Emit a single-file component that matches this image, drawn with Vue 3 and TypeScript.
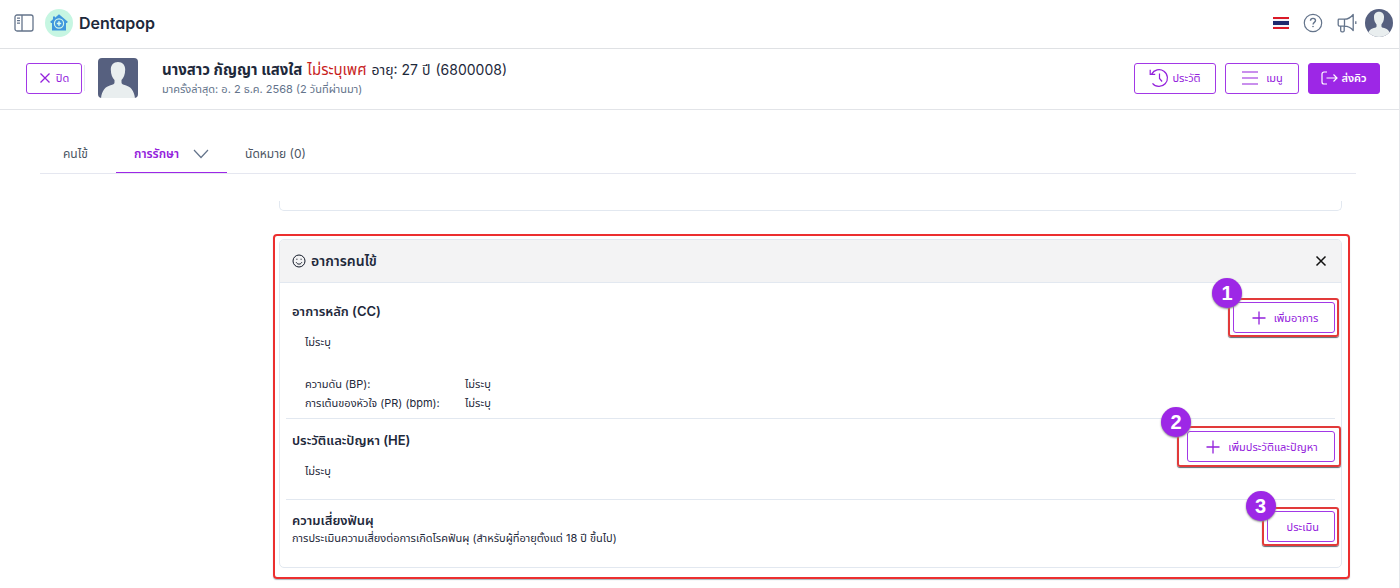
<script setup lang="ts">
interface Vital {
  label: string
  value: string
}

const vitals: Vital[] = [
  { label: 'ความดัน (BP):', value: 'ไม่ระบุ' },
  { label: 'การเต้นของหัวใจ (PR) (bpm):', value: 'ไม่ระบุ' },
]
</script>

<template>
  <div class="app">
    <header class="topbar">
      <button class="icon-btn" type="button" aria-label="Sidebar">
        <svg width="20" height="18" viewBox="0 0 20 18" fill="none" stroke="#64748b" stroke-width="1.3">
          <rect x="1" y="1" width="18" height="16" rx="2" />
          <path d="M8 1v16M3 4.2h3M3 6.7h3M3 9.2h3" />
        </svg>
      </button>
      <a class="brand" href="#">
        <svg width="28" height="28" viewBox="0 0 28 28">
          <circle cx="14" cy="14" r="14" fill="#c6f6e2" />
          <path d="M14 5.200 22.800 12.800l-.8 1.200h-1V21.500H7V14H6l-.8-1.200L8 10.300V7.500h2v1.200z" fill="#3f97dd" />
          <circle cx="14" cy="14.500" r="4.600" fill="none" stroke="#d0f7ea" stroke-width="1.200" />
          <path d="M14 12.300v4.400M11.800 14.500h4.400" stroke="#d8fbee" stroke-width="1.500" />
        </svg>
        <span>Dentapop</span>
      </a>
      <nav class="tools">
        <button class="icon-btn" type="button" aria-label="Language">
          <svg width="16" height="12" viewBox="0 0 16 12">
            <path fill="#da1a28" d="M0 0h16v12H0z" />
            <path fill="#f4f5f8" d="M0 2h16v8H0z" />
            <path fill="#1e2a6e" d="M0 4h16v4H0z" />
          </svg>
        </button>
        <button class="icon-btn" type="button" aria-label="Help">
          <svg width="20" height="20" viewBox="0 0 20 20" fill="none" stroke="#64748b" stroke-width="1.2">
            <circle cx="10" cy="10" r="8.700" />
            <path d="M7.500 7.800c0-1.500 1.100-2.400 2.500-2.400s2.500.9 2.500 2.200c0 1.900-2.400 1.700-2.400 3.800" stroke-width="1.400" />
            <circle cx="10" cy="13.600" r=".5" fill="#64748b" stroke-width=".6" />
          </svg>
        </button>
        <button class="icon-btn" type="button" aria-label="News">
          <svg width="20" height="20" viewBox="0 0 20 20" fill="none" stroke="#64748b" stroke-width="1.300" stroke-linejoin="round">
            <path d="M2 6.200h5.500v7H2.600A1.400 1.400 0 0 1 1.200 11.800V7a.8.8 0 0 1 .8-.8zM7.500 6.200c3.500 0 6.200-1.600 8.700-4.700v16c-2.500-3-5.200-4.300-8.700-4.300M3.700 13.200v4.300a1.300 1.300 0 0 0 1.300 1.300h1a1.200 1.200 0 0 0 1.200-1.300v-4.300M18.800 8.300v2.600" />
          </svg>
        </button>
        <button class="icon-btn" type="button" aria-label="Account">
          <svg class="round" width="28" height="28" viewBox="0 0 40 40">
            <path fill="#56607f" d="M0 0h40v40H0z" />
            <path fill="#e9eeef" d="M20 4c4.500 0 7.200 3 7.200 7.500 0 5-1.700 8.500-3.700 10.500v2.500c0 1.500 1.500 2 4 2.700 5 1.500 8.500 4.800 9.500 12.800H3c1-8 4.500-11.300 9.500-12.800 2.500-.7 4-1.200 4-2.700V22c-2-2-3.700-5.500-3.700-10.500C12.800 7 15.500 4 20 4z" />
          </svg>
        </button>
      </nav>
    </header>

    <section class="patient">
      <button class="btn close" type="button">
        <svg width="12" height="12" viewBox="0 0 12 12" stroke="currentColor" stroke-width="1.300"><path d="M1.500 1.500l9 9M10.500 1.500l-9 9" /></svg>
        <span>ปิด</span>
      </button>
      <span class="rule"></span>
      <svg class="avatar" width="40" height="40" viewBox="0 0 40 40">
        <path fill="#56607f" d="M0 0h40v40H0z" />
        <path fill="#e9eeef" d="M20 4c4.500 0 7.200 3 7.200 7.500 0 5-1.700 8.500-3.700 10.500v2.500c0 1.500 1.500 2 4 2.700 5 1.500 8.500 4.800 9.500 12.800H3c1-8 4.500-11.300 9.500-12.800 2.500-.7 4-1.200 4-2.700V22c-2-2-3.700-5.500-3.700-10.500C12.800 7 15.500 4 20 4z" />
      </svg>
      <div class="who">
        <p class="name">
          <strong>นางสาว กัญญา แสงใส</strong>
          <span class="warn">ไม่ระบุเพศ</span>
          <span class="detail">อายุ: 27 ปี</span>
          <span class="detail">(6800008)</span>
        </p>
        <p class="last">มาครั้งล่าสุด: อ. 2 ธ.ค. 2568 (2 วันที่ผ่านมา)</p>
      </div>
      <div class="actions">
        <button class="btn history" type="button">
          <svg width="20" height="20" viewBox="0 0 20 20" fill="none" stroke="currentColor" stroke-width="1.200">
            <path d="M2.600 6.100A8.400 8.400 0 1 1 3.500 15.300M1.200 1.800v4.600h5M10.500 5.500v5l2.600 3" />
          </svg>
          <span>ประวัติ</span>
        </button>
        <button class="btn menu" type="button">
          <svg width="18" height="14" viewBox="0 0 18 14" stroke="currentColor" stroke-width="1.200"><path d="M1 1h16M1 7h16M1 13h16" /></svg>
          <span>เมนู</span>
        </button>
        <button class="btn primary" type="button">
          <svg width="17" height="14" viewBox="0 0 17 14" fill="none" stroke="currentColor" stroke-width="1.200"><path d="M6 1H3a2 2 0 0 0-2 2v8a2 2 0 0 0 2 2h3M5.500 7H16M12.500 3.500 16 7l-3.500 3.500" /></svg>
          <span>ส่งคิว</span>
        </button>
      </div>
    </section>

    <main class="page">
      <nav class="tabs">
        <a class="tab" href="#">คนไข้</a>
        <a class="tab active" href="#">
          <span>การรักษา</span>
          <svg width="16" height="10" viewBox="0 0 16 10" fill="none" stroke="#64748b" stroke-width="1.200"><path d="M1 1l7 7.500L15 1" /></svg>
        </a>
        <a class="tab" href="#">นัดหมาย (0)</a>
      </nav>

      <div class="content">
        <div class="prev"></div>
        <article class="card">
          <header class="card-head">
            <svg width="14" height="14" viewBox="0 0 14 14" fill="none" stroke="#111827" stroke-width="1">
              <circle cx="7" cy="7" r="6" />
              <path d="M4.200 8.300c.6 1.200 1.600 1.800 2.800 1.800s2.200-.6 2.800-1.800" />
              <path d="M4.900 4.700v1.100M9.100 4.700v1.100" />
            </svg>
            <h2>อาการคนไข้</h2>
            <button class="icon-btn" type="button" aria-label="Close">
              <svg width="12" height="12" viewBox="0 0 12 12" stroke="#111" stroke-width="1.500"><path d="M1.500 1.500l9 9M10.500 1.500l-9 9" /></svg>
            </button>
          </header>

          <section class="block cc">
            <div>
              <h3>อาการหลัก (CC)</h3>
              <p class="value">ไม่ระบุ</p>
              <dl class="vitals">
                <template v-for="v in vitals" :key="v.label">
                  <dt>{{ v.label }}</dt>
                  <dd>{{ v.value }}</dd>
                </template>
              </dl>
            </div>
            <div class="marked">
              <button class="btn add" type="button">
                <svg width="14" height="14" viewBox="0 0 14 14" stroke="currentColor" stroke-width="1.300"><path d="M7 .5v13M.5 7h13" /></svg>
                <span>เพิ่มอาการ</span>
              </button>
              <span class="frame"></span>
              <span class="badge">1</span>
            </div>
          </section>

          <section class="block he">
            <div>
              <h3>ประวัติและปัญหา (HE)</h3>
              <p class="value">ไม่ระบุ</p>
            </div>
            <div class="marked wide">
              <button class="btn add" type="button">
                <svg width="14" height="14" viewBox="0 0 14 14" stroke="currentColor" stroke-width="1.300"><path d="M7 .5v13M.5 7h13" /></svg>
                <span>เพิ่มประวัติและปัญหา</span>
              </button>
              <span class="frame"></span>
              <span class="badge">2</span>
            </div>
          </section>

          <section class="block risk">
            <div>
              <h3>ความเสี่ยงฟันผุ</h3>
              <p class="note">การประเมินความเสี่ยงต่อการเกิดโรคฟันผุ (สำหรับผู้ที่อายุตั้งแต่ 18 ปี ขึ้นไป)</p>
            </div>
            <div class="marked low">
              <button class="btn assess" type="button">ประเมิน</button>
              <span class="frame"></span>
              <span class="badge">3</span>
            </div>
          </section>
          <span class="outline"></span>
        </article>
      </div>
    </main>
  </div>
</template>

<style>
body {
  margin: 0;
  background: #fff;
}
</style>

<style scoped>
* {
  box-sizing: border-box;
}
.app {
  min-height: 100vh;
  border-right: 1px solid #e5e7eb;
  overflow: hidden;
  font-family: Inter, "Noto Sans Thai", "Noto Sans", sans-serif;
  font-size: 11px;
  line-height: 16px;
  color: #1e293b;
}
h2, h3, p, dl, dd {
  margin: 0;
}
a {
  color: inherit;
  text-decoration: none;
}
svg {
  display: block;
  flex: none;
}
button {
  font: inherit;
  color: inherit;
}
.icon-btn {
  padding: 0;
  border: 0;
  background: none;
}
.topbar {
  display: flex;
  align-items: center;
  height: 49px;
  padding: 0 6px 2px 14px;
  border-bottom: 1px solid #dfe1e4;
}
.brand {
  display: flex;
  align-items: center;
  gap: 6px;
  margin-left: 11px;
  font-size: 16px;
  font-weight: 600;
  font-feature-settings: "cv11";
}
.tools {
  display: flex;
  align-items: center;
  gap: 14px;
  margin-left: auto;
}
.tools .icon-btn:last-child {
  margin-left: -6px;
}
.round {
  border-radius: 50%;
}
.patient {
  display: flex;
  align-items: center;
  height: 61px;
  padding: 0 19px 2px 26px;
  border-bottom: 1px solid #e2e4e8;
}
.btn {
  display: flex;
  align-items: center;
  justify-content: center;
  height: 31px;
  padding: 0 15px;
  border: 1px solid #a238e6;
  border-radius: 3px;
  background: #fff;
  color: #9320dc;
  white-space: nowrap;
}
.close {
  width: 56px;
  gap: 5px;
  padding: 0;
}
.rule {
  width: 1px;
  height: 26px;
  margin: 0 13px 0 2px;
  background: #e2e8f0;
}
.avatar {
  border-radius: 4px;
}
.who {
  margin-left: 24px;
  padding-top: 2px;
}
.name {
  display: flex;
  align-items: baseline;
  gap: 5px;
  font-size: 15px;
  line-height: 20px;
}
.detail {
  font-size: 14px;
}
.warn {
  color: #c81e1e;
}
.last {
  line-height: 18px;
  color: #64748b;
}
.actions {
  display: flex;
  gap: 9px;
  margin-left: auto;
}
.history {
  width: 82px;
  gap: 3px;
}
.menu {
  width: 74px;
  gap: 7px;
}
.primary {
  width: 72px;
  gap: 3px;
  background: #9d27e6;
  border-color: #9d27e6;
  color: #fff;
  font-weight: 600;
}
.page {
  padding: 24px 43px 0 40px;
}
.tabs {
  display: flex;
  height: 40px;
  border-bottom: 1px solid #e5e7f0;
  font-size: 12px;
  color: #4b5563;
}
.tab {
  display: flex;
  align-items: center;
  gap: 14px;
  height: 39px;
  padding: 2px 18px 0;
  border-bottom: 1px solid transparent;
}
.tab:first-child {
  min-width: 76px;
  padding: 2px 23px 0;
}
.tab.active {
  border-bottom-color: #9d27e6;
  color: #9320dc;
  font-weight: 600;
}
.content {
  margin: 27px 14px 0 239px;
}
.prev {
  height: 10px;
  border: 1px solid #e2e8f0;
  border-top: 0;
  border-radius: 0 0 5px 5px;
}
.card {
  position: relative;
  margin-top: 28px;
  border: 1px solid #e2e8f0;
  border-radius: 5px;
}
.card-head {
  display: flex;
  align-items: center;
  gap: 5px;
  height: 43px;
  padding: 0 14px 0 12px;
  border-bottom: 1px solid #e2e8f0;
  border-radius: 4px 4px 0 0;
  background: #f3f3f4;
}
.card-head .icon-btn {
  margin-left: auto;
}
h2, h3 {
  font-size: 13px;
  line-height: 18px;
  font-weight: 600;
}
h2 {
  font-size: 14px;
}
.block {
  display: flex;
  justify-content: space-between;
  align-items: flex-start;
  margin: 0 6px;
  padding-left: 6px;
  border-bottom: 1px solid #e2e8f0;
}
.cc {
  padding-top: 19px;
  padding-bottom: 7px;
}
.he {
  padding-top: 12px;
  padding-bottom: 20px;
}
.risk {
  padding-top: 11px;
  padding-bottom: 20px;
  border-bottom: 0;
}
.value {
  margin: 14px 0 0 13px;
}
.vitals {
  display: grid;
  grid-template-columns: 160px auto;
  justify-content: start;
  row-gap: 3px;
  margin: 26px 0 0 13px;
}
.note {
  line-height: 18px;
}
.marked {
  position: relative;
}
.frame {
  position: absolute;
  inset: -4px -4px -4px -5px;
  border: 2px solid #e23a3a;
  border-radius: 3px;
  box-shadow: 0 1px 1px #5c6b73;
  pointer-events: none;
}
.wide .frame {
  inset: -5px -6px -5px -10px;
}
.badge {
  position: absolute;
  top: -24px;
  left: -21px;
  width: 30px;
  height: 30px;
  border-radius: 50%;
  background: #9d27e6;
  box-shadow: 0 1px 2px #8a8a8a;
  color: #fff;
  font: 700 20px/30px "Liberation Sans", Arial, sans-serif;
  text-align: center;
}
.wide .badge {
  left: -26px;
}
.low .badge {
  top: -20px;
}
.add {
  gap: 8px;
  min-width: 102px;
  padding-left: 17px;
}
.wide .add {
  min-width: 148px;
}
.assess {
  padding-left: 19px;
}
.outline {
  position: absolute;
  inset: -6px -9px -12px -7px;
  border: 2px solid #ec2f2f;
  border-radius: 4px;
  box-shadow: 0 1px 1px #a9b8bd;
  pointer-events: none;
}
</style>
